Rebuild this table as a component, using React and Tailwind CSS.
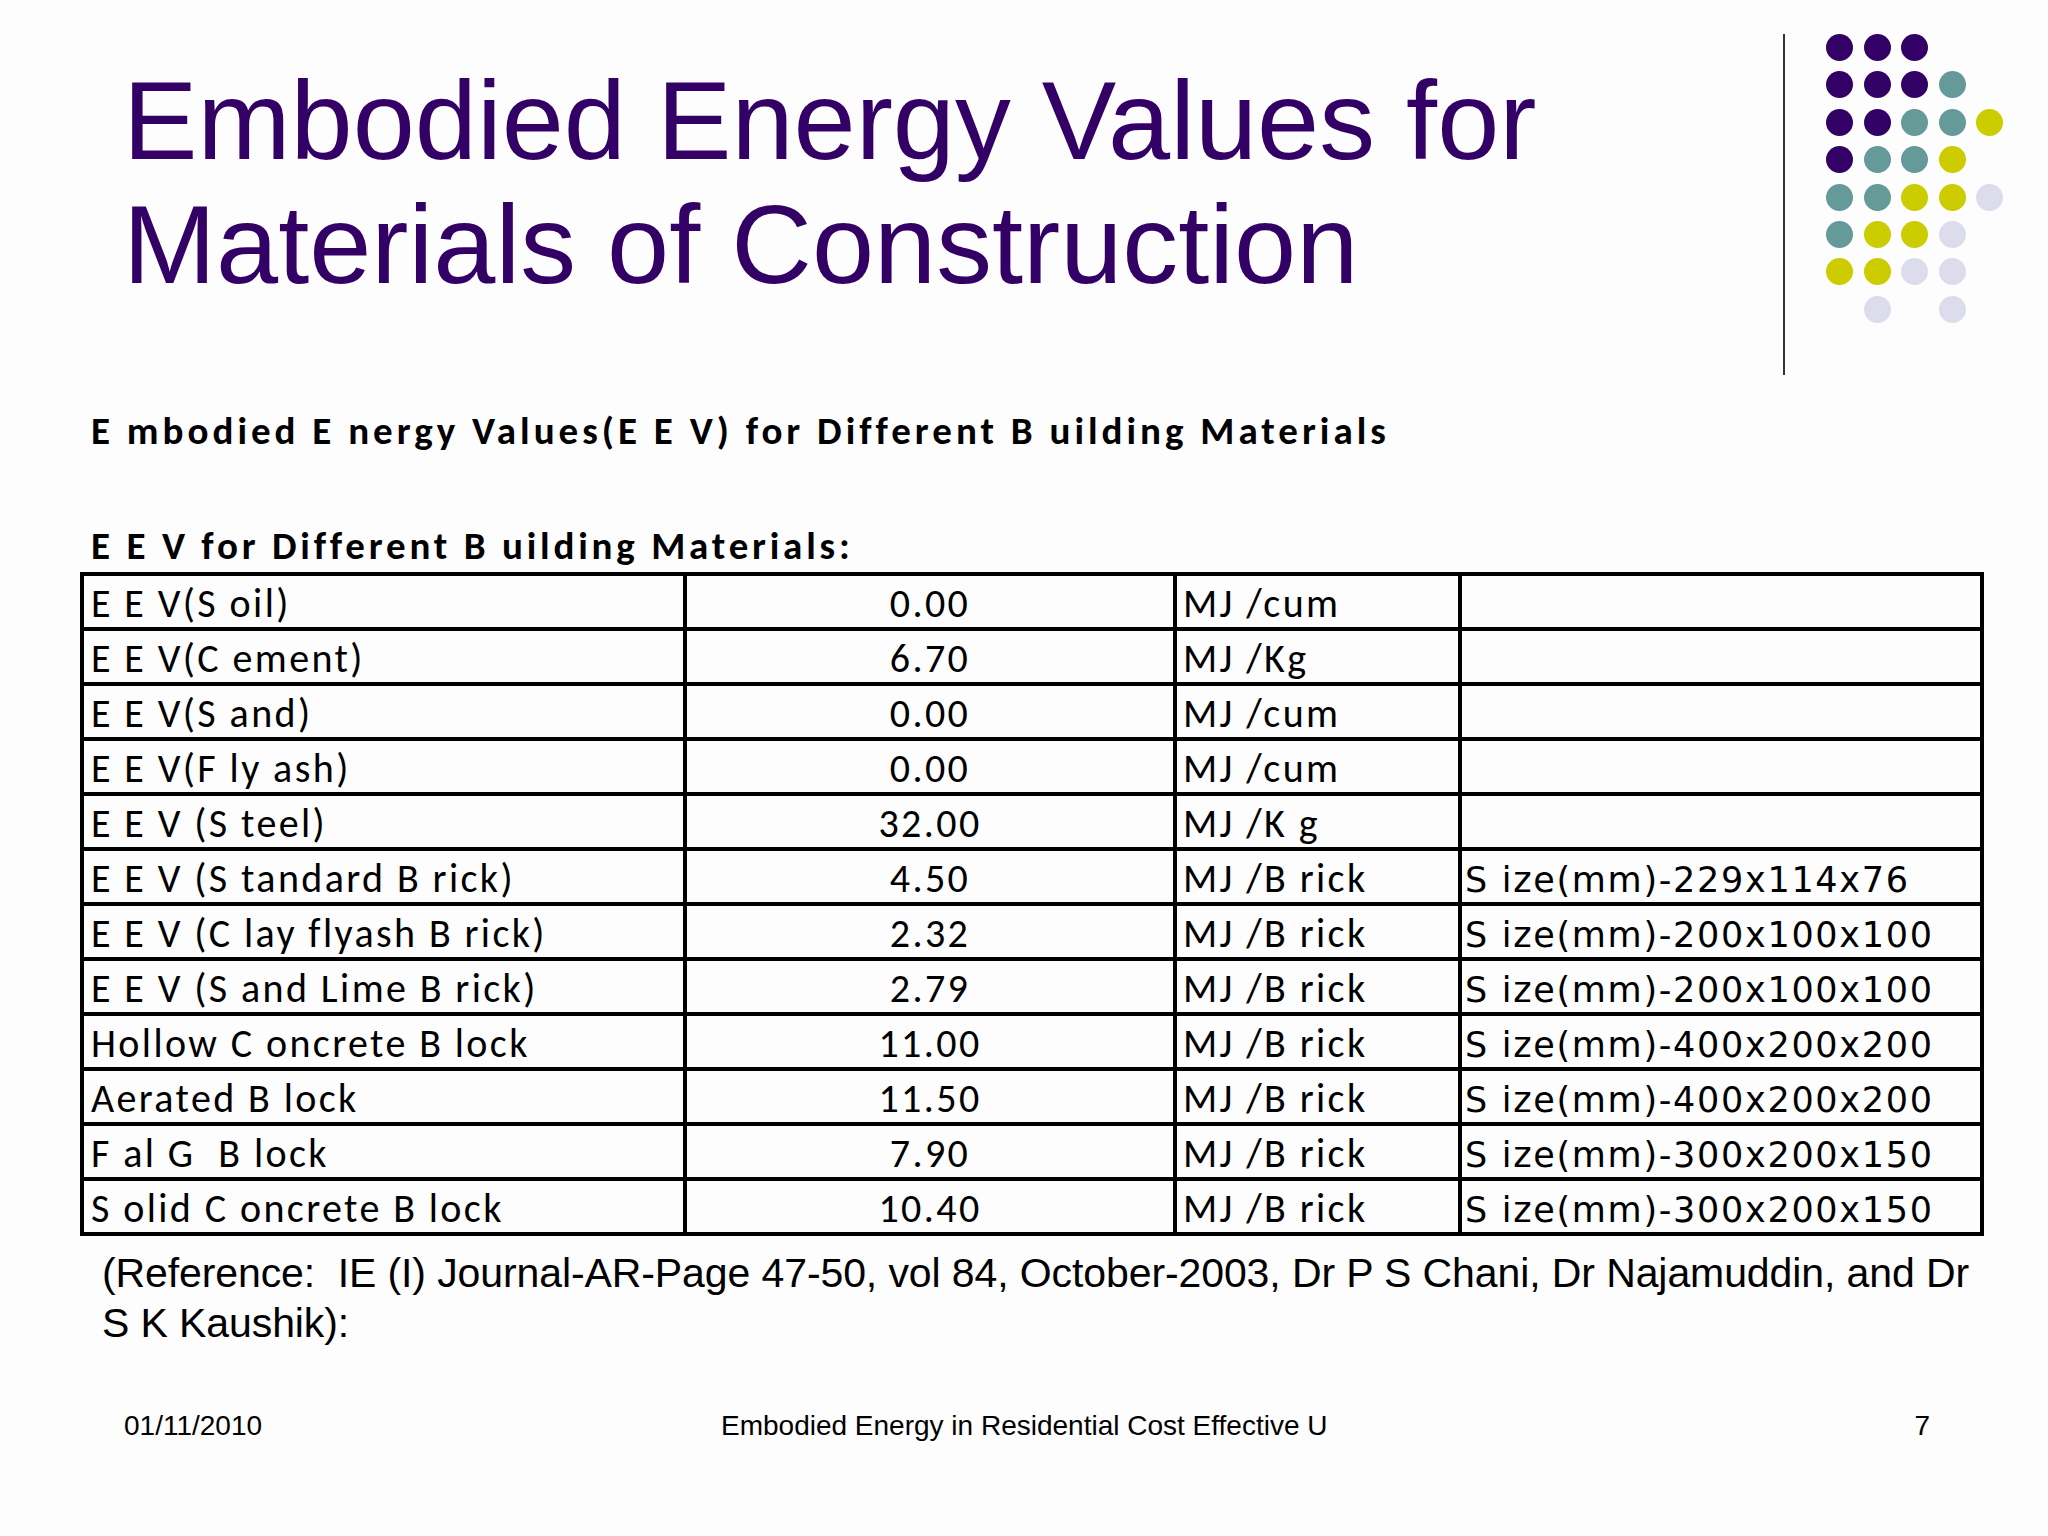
const DOTS = [
  ["p", "p", "p", "", ""],
  ["p", "p", "p", "t", ""],
  ["p", "p", "t", "t", "y"],
  ["p", "t", "t", "y", ""],
  ["t", "t", "y", "y", "l"],
  ["t", "y", "y", "l", ""],
  ["y", "y", "l", "l", ""],
  ["", "l", "", "l", ""],
];

const DOT_CLASS = {
  p: "bg-[#330066]",
  t: "bg-[#669999]",
  y: "bg-[#cccc00]",
  l: "bg-[#dcdcec]",
};

const ROWS = [
  ["E E V(S oil)", "0.00", "MJ /cum", ""],
  ["E E V(C ement)", "6.70", "MJ /Kg", ""],
  ["E E V(S and)", "0.00", "MJ /cum", ""],
  ["E E V(F ly ash)", "0.00", "MJ /cum", ""],
  ["E E V (S teel)", "32.00", "MJ /K g", ""],
  ["E E V (S tandard B rick)", "4.50", "MJ /B rick", "S ize(mm)-229x114x76"],
  ["E E V (C lay flyash B rick)", "2.32", "MJ /B rick", "S ize(mm)-200x100x100"],
  ["E E V (S and Lime B rick)", "2.79", "MJ /B rick", "S ize(mm)-200x100x100"],
  ["Hollow C oncrete B lock", "11.00", "MJ /B rick", "S ize(mm)-400x200x200"],
  ["Aerated B lock", "11.50", "MJ /B rick", "S ize(mm)-400x200x200"],
  ["F al G  B lock", "7.90", "MJ /B rick", "S ize(mm)-300x200x150"],
  ["S olid C oncrete B lock", "10.40", "MJ /B rick", "S ize(mm)-300x200x150"],
];

const calibri = "font-['Carlito','Lato',sans-serif]";

export default function App() {
  return (
    <div className="w-[2048px] h-[1536px] bg-[#fdfdfd] flex flex-col font-['Liberation_Sans',Arial,sans-serif] text-black overflow-hidden">
      {/* header: title + decorative dots */}
      <div className="flex items-start h-[380px]">
        <h1 className="flex-1 pl-[123px] pt-[59px] text-[111.7px] leading-[124px] text-[#330066] font-normal">
          Embodied Energy Values for
          <br />
          Materials of Construction
        </h1>
        <div className="mt-[34px] w-[2px] h-[341px] bg-[#333333]" />
        <div className="ml-[41px] mt-[34px] mr-[45px] grid grid-cols-[repeat(5,27px)] gap-[10.4px]">
          {DOTS.flat().map((c, i) => (
            <div key={i} className={`w-[27px] h-[27px] rounded-full ${c ? DOT_CLASS[c] : ""}`} />
          ))}
        </div>
      </div>

      <div className={`${calibri} pl-[91px] font-bold text-[39px] leading-[46px] tracking-[4px] whitespace-pre mt-[28px]`}>
        E mbodied E nergy Values(E E V) for Different B uilding Materials
      </div>
      <div className={`${calibri} pl-[91px] font-bold text-[39px] leading-[46px] tracking-[3.8px] whitespace-pre mt-[69px]`}>
        E E V for Different B uilding Materials:
      </div>

      <table className={`${calibri} ml-[80px] mt-[3px] w-[1900px] table-fixed border-collapse text-[40px] leading-none tracking-[2.4px]`}>
        <colgroup>
          <col className="w-[603px]" />
          <col className="w-[490px]" />
          <col className="w-[285px]" />
          <col className="w-[522px]" />
        </colgroup>
        <tbody>
          {ROWS.map((r, i) => (
            <tr key={i} className="h-[55px]">
              <td className="border-4 border-black pl-[7px] pb-[3px] align-bottom whitespace-pre">{r[0]}</td>
              <td className="border-4 border-black text-center pb-[3px] align-bottom">{r[1]}</td>
              <td className="border-4 border-black pl-[6px] pb-[3px] align-bottom whitespace-pre">{r[2]}</td>
              <td className="border-4 border-black pl-[3px] pb-[4px] align-bottom whitespace-pre font-['DejaVu_Sans',sans-serif] text-[35px] tracking-[1.7px]">
                {r[3]}
              </td>
            </tr>
          ))}
        </tbody>
      </table>

      <p className="pl-[102px] pr-[56px] mt-[12px] text-[41px] leading-[50px] tracking-[-0.1px] whitespace-pre-wrap">
        (Reference:  IE (I) Journal-AR-Page 47-50, vol 84, October-2003, Dr P S Chani, Dr Najamuddin, and Dr S K Kaushik):
      </p>

      <div className="mt-auto mb-[96px] flex items-end text-[28px] leading-none">
        <span className="pl-[124px] w-[721px]">01/11/2010</span>
        <span className="flex-1">Embodied Energy in Residential Cost Effective U</span>
        <span className="pr-[118px]">7</span>
      </div>
    </div>
  );
}
